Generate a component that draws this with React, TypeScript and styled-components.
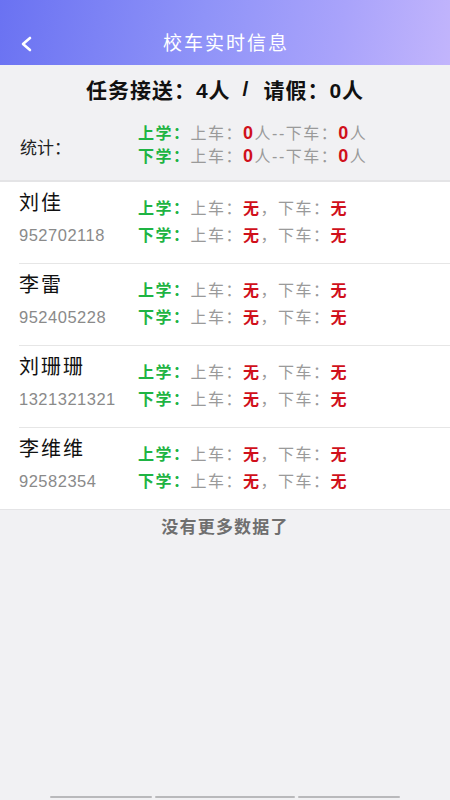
import styled, { createGlobalStyle } from 'styled-components';

const GlobalStyle = createGlobalStyle`
  html, body {
    margin: 0;
    padding: 0;
    background: #f1f1f3;
  }
  body {
    font-family: "Liberation Sans", "Noto Sans CJK SC", sans-serif;
  }
`;

const Page = styled.div`
  width: 450px;
  height: 800px;
  display: flex;
  flex-direction: column;
  background: #f1f1f3;
  overflow: hidden;
`;

const Header = styled.header`
  height: 65px;
  box-sizing: border-box;
  padding-top: 22px;
  display: grid;
  grid-template-columns: 60px 1fr 60px;
  align-items: center;
  background: linear-gradient(100deg, #6a72f2 0%, #8f93f8 45%, #a9a3fb 75%, #c2b5fc 100%);
  color: #fff;
`;

const BackButton = styled.div`
  display: flex;
  align-items: center;
  padding-left: 20px;
  height: 43px;
`;

const Title = styled.h1`
  margin: 0;
  text-align: center;
  font-size: 19px;
  font-weight: 400;
  letter-spacing: 2px;
  padding-left: 2px;
  line-height: 43px;
`;

const Summary = styled.div`
  height: 48px;
  display: flex;
  align-items: center;
  justify-content: center;
  font-size: 21px;
  font-weight: 700;
  letter-spacing: 1px;
  color: #111;
`;

const Slash = styled.span`
  margin: 0 14px 0 12px;
`;

const Stats = styled.div`
  height: 67px;
  box-sizing: border-box;
  padding: 9px 0 0 20px;
  display: flex;
  align-items: flex-start;
`;

const StatsLabel = styled.div`
  width: 118px;
  margin-top: 16px;
  line-height: 22px;
  font-size: 17px;
  color: #222;
`;

const Lines = styled.div<{ $lh: number }>`
  display: flex;
  flex-direction: column;
  font-size: 16px;
  letter-spacing: 1.5px;
  line-height: ${(p) => p.$lh}px;
  white-space: nowrap;
`;

const Green = styled.span`
  color: #1eb443;
  font-weight: 700;
`;

const Gray = styled.span`
  color: #9a9a9a;
`;

const Red = styled.span<{ $big?: boolean }>`
  color: #d0101b;
  font-weight: 700;
  font-size: ${(p) => (p.$big ? '18px' : '16px')};
`;

const List = styled.div`
  background: #fff;
  border-top: 2px solid #e4e4e6;
  border-bottom: 1px solid #e4e4e6;
`;

const Item = styled.div`
  padding-left: 19px;
`;

const ItemInner = styled.div<{ $last?: boolean }>`
  height: 81px;
  display: flex;
  align-items: flex-start;
  border-bottom: ${(p) => (p.$last ? 'none' : '1px solid #e6e6e6')};
`;

const Person = styled.div`
  width: 119px;
  padding-top: 8px;
  display: flex;
  flex-direction: column;
`;

const Name = styled.div`
  font-size: 20px;
  letter-spacing: 2px;
  line-height: 26px;
  color: #111;
`;

const Phone = styled.div`
  margin-top: 6px;
  font-size: 16.5px;
  letter-spacing: 0.5px;
  line-height: 26px;
  color: #8a8a8a;
`;

const Trips = styled.div`
  padding-top: 13px;
`;

const NoMore = styled.div`
  text-align: center;
  padding-top: 6px;
  font-size: 17px;
  font-weight: 700;
  letter-spacing: 1.2px;
  color: #6f6f6f;
  line-height: 24px;
`;

const Spacer = styled.div`
  flex: 1;
`;

const HomeBars = styled.div`
  display: flex;
  gap: 3px;
  padding-left: 50px;
  height: 4px;
`;

const Bar = styled.div<{ $w: number }>`
  width: ${(p) => p.$w}px;
  height: 2px;
  background: #b9b9bb;
  border-radius: 1px;
`;

const students = [
  { name: '刘佳', phone: '952702118' },
  { name: '李雷', phone: '952405228' },
  { name: '刘珊珊', phone: '1321321321' },
  { name: '李维维', phone: '92582354' },
];

const StatLine = ({ label }: { label: string }) => (
  <div>
    <Green>{label}：</Green>
    <Gray>上车：</Gray>
    <Red $big>0</Red>
    <Gray>人--下车：</Gray>
    <Red $big>0</Red>
    <Gray>人</Gray>
  </div>
);

const TripLine = ({ label }: { label: string }) => (
  <div>
    <Green>{label}：</Green>
    <Gray>上车：</Gray>
    <Red>无</Red>
    <Gray>，下车：</Gray>
    <Red>无</Red>
  </div>
);

export default function App() {
  return (
    <Page>
      <GlobalStyle />
      <Header>
        <BackButton>
          <svg width="14" height="16" viewBox="0 0 14 16">
            <polyline
              points="10,2 3,8 10,14"
              fill="none"
              stroke="#fff"
              strokeWidth="2.6"
              strokeLinecap="round"
              strokeLinejoin="round"
            />
          </svg>
        </BackButton>
        <Title>校车实时信息</Title>
        <div />
      </Header>

      <Summary>
        任务接送：4人<Slash>/</Slash>请假：0人
      </Summary>

      <Stats>
        <StatsLabel>统计：</StatsLabel>
        <Lines $lh={22}>
          <StatLine label="上学" />
          <StatLine label="下学" />
        </Lines>
      </Stats>

      <List>
        {students.map((s, idx) => (
          <Item key={s.phone}>
            <ItemInner $last={idx === students.length - 1}>
              <Person>
                <Name>{s.name}</Name>
                <Phone>{s.phone}</Phone>
              </Person>
              <Trips>
                <Lines $lh={27}>
                  <TripLine label="上学" />
                  <TripLine label="下学" />
                </Lines>
              </Trips>
            </ItemInner>
          </Item>
        ))}
      </List>

      <NoMore>没有更多数据了</NoMore>
      <Spacer />
      <HomeBars>
        <Bar $w={102} />
        <Bar $w={140} />
        <Bar $w={102} />
      </HomeBars>
    </Page>
  );
}
